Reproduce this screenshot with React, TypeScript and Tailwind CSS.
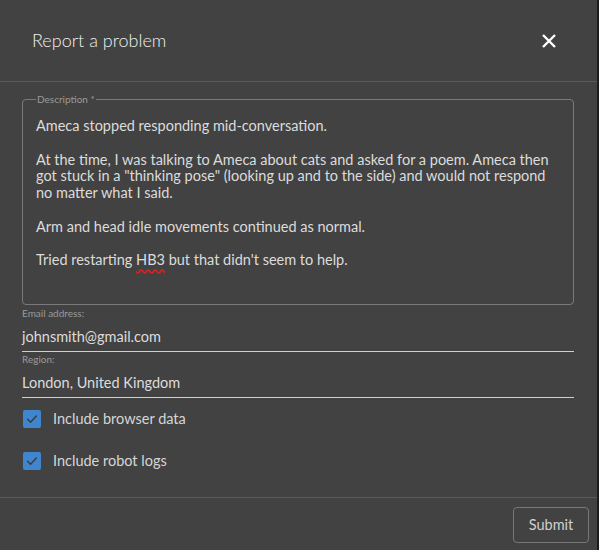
import React, { useState } from 'react';

const font = { fontFamily: 'Lato, "Noto Sans", sans-serif' };

const lines = [
  'Ameca stopped responding mid-conversation.',
  '',
  'At the time, I was talking to Ameca about cats and asked for a poem. Ameca then',
  'got stuck in a "thinking pose" (looking up and to the side) and would not respond',
  'no matter what I said.',
  '',
  'Arm and head idle movements continued as normal.',
  '',
];

function Check({ checked, onToggle, label }: { checked: boolean; onToggle: () => void; label: string }) {
  return (
    <label className="flex items-center gap-3 h-[18px] cursor-pointer" onClick={onToggle}>
      <span className={`w-[18px] h-[18px] rounded-[2px] flex items-center justify-center ${checked ? 'bg-[#3f86cf]' : 'border-2 border-[#aaa]'}`}>
        {checked && (
          <svg width="14" height="14" viewBox="0 0 24 24" fill="none">
            <path d="M4.5 12.5l5 5L19.5 7" stroke="#3c3c3c" strokeWidth="2.6" strokeLinecap="round" strokeLinejoin="round" />
          </svg>
        )}
      </span>
      <span className="text-[14.5px] text-[#d6d6d6]">{label}</span>
    </label>
  );
}

export default function App() {
  const [browser, setBrowser] = useState(true);
  const [logs, setLogs] = useState(true);

  return (
    <div className="w-[599px] h-[550px] bg-[#1c1c1c] flex overflow-hidden" style={font}>
      <div className="w-[597px] h-full bg-[#424242] flex flex-col">
        <div className="h-[82px] shrink-0 flex items-center justify-between pl-8 pr-[40px] border-b border-[#5a5a5a]">
          <h1 className="text-[18px] font-light text-[#f0f0f0]">Report a problem</h1>
          <button className="text-white">
            <svg width="16" height="16" viewBox="0 0 16 16">
              <path d="M2 2L14 14M14 2L2 14" stroke="#fff" strokeWidth="2.4" />
            </svg>
          </button>
        </div>

        <div className="flex-1 px-[22px] pt-[11px] pr-[23px] flex flex-col">
          <fieldset className="border border-[#7a7a7a] rounded-[4px] h-[212px] pl-[13px] pr-3 pt-[1px]">
            <legend className="ml-[0px] px-[1px] text-[10px] text-[#9a9a9a] leading-[12px]">Description *</legend>
            <div className="text-[14.5px] leading-[16.8px] text-[#dcdcdc] mt-[12px] whitespace-nowrap">
              {lines.map((l, i) => (
                <div key={i} className="h-[16.8px]">{l}</div>
              ))}
              <div className="flex h-[16.8px]">
                <span className="whitespace-pre">Tried restarting </span>
                <span className="underline decoration-wavy decoration-[#e02020] underline-offset-[3px]">HB3</span>
                <span className="whitespace-pre"> but that didn't seem to help.</span>
              </div>
            </div>
          </fieldset>

          <div className="mt-[2px] border-b border-[#cfcfcf] pb-[5px]">
            <div className="text-[10px] text-[#9a9a9a] leading-[12px]">Email address:</div>
            <div className="text-[14.5px] text-[#dcdcdc] leading-[18px] mt-[9px]">johnsmith@gmail.com</div>
          </div>
          <div className="mt-[1px] border-b border-[#cfcfcf] pb-[5px]">
            <div className="text-[10px] text-[#9a9a9a] leading-[12px]">Region:</div>
            <div className="text-[14.5px] text-[#dcdcdc] leading-[18px] mt-[9px]">London, United Kingdom</div>
          </div>

          <div className="mt-[12px] pl-[1px] flex flex-col gap-[24px]">
            <Check checked={browser} onToggle={() => setBrowser(!browser)} label="Include browser data" />
            <Check checked={logs} onToggle={() => setLogs(!logs)} label="Include robot logs" />
          </div>
        </div>

        <div className="h-[53px] shrink-0 border-t border-[#5a5a5a] flex items-center justify-end pr-[8px]">
          <button className="w-[76px] h-[36px] mt-[1px] border border-[#777] rounded-[4px] text-[14.5px] text-[#d0d0d0]">
            Submit
          </button>
        </div>
      </div>
    </div>
  );
}
